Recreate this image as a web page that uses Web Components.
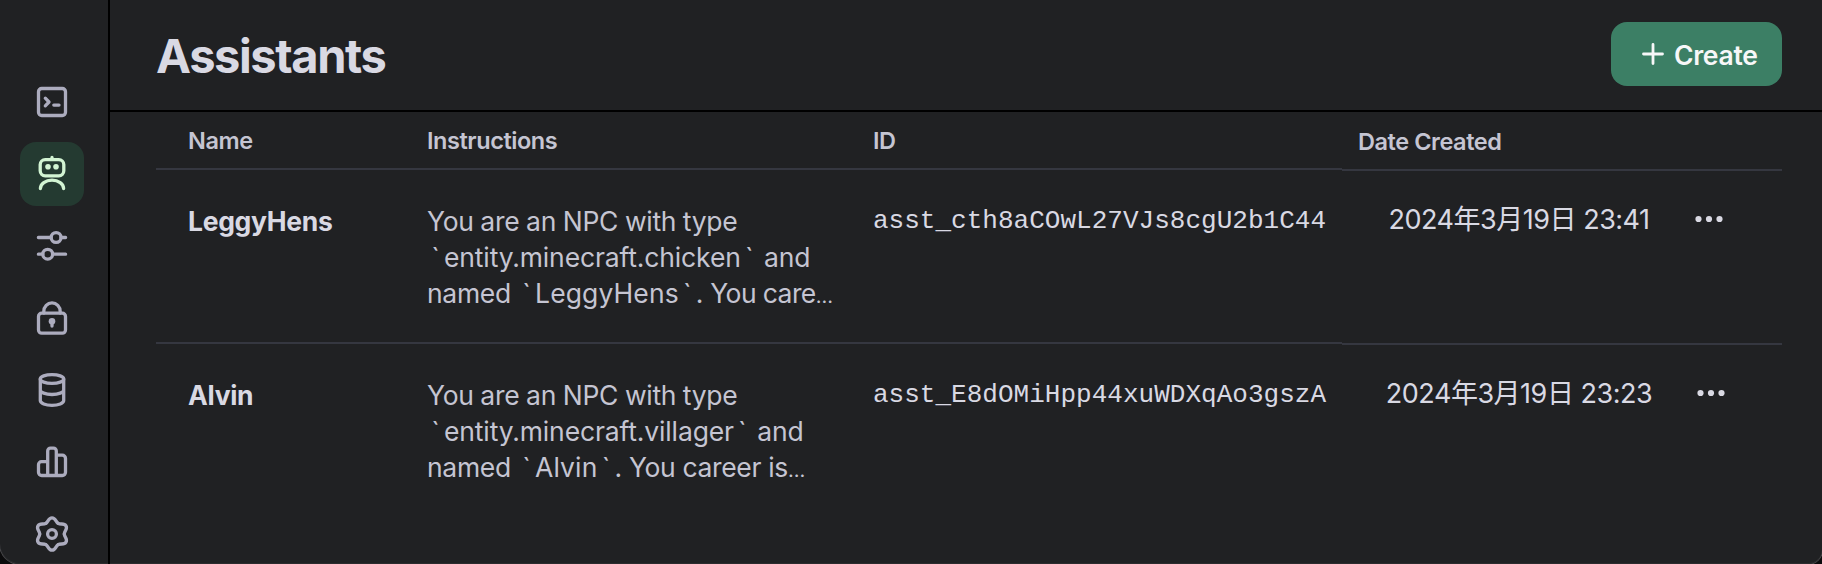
<!DOCTYPE html>
<html lang="en">
<head>
<meta charset="utf-8">
<title>Assistants</title>
<style>
html,body{margin:0;height:100%;background:#0b0b0c;overflow:hidden}
body{font-family:Inter,"Noto Sans CJK SC",sans-serif;color:#d9d9e3}
</style>
</head>
<body>
<app-window>
  <side-nav slot="nav">
    <nav-item icon="terminal"></nav-item>
    <nav-item icon="robot" active></nav-item>
    <nav-item icon="sliders"></nav-item>
    <nav-item icon="lock"></nav-item>
    <nav-item icon="database"></nav-item>
    <nav-item icon="chart"></nav-item>
    <nav-item icon="gear"></nav-item>
  </side-nav>
  <page-header>Assistants<create-button slot="action">Create</create-button></page-header>
  <assistant-table>
    <table-head></table-head>
    <assistant-row assistant-id="asst_cth8aCOwL27VJs8cgU2b1C44">
      <span slot="name">LeggyHens</span>
      <text-line slot="text" style="letter-spacing:-.3px;word-spacing:-.4px">You are an NPC with type</text-line>
      <text-line slot="text" style="letter-spacing:-.14px;word-spacing:-1px"><back-tick>`</back-tick>entity.minecraft.chicken<back-tick>`</back-tick> and</text-line>
      <text-line slot="text" style="letter-spacing:-.3px">named <back-tick>`</back-tick><span style="letter-spacing:.1px">LeggyHens</span><back-tick>`</back-tick>. <span style="letter-spacing:-.6px">You care</span><span style="font-size:20px">…</span></text-line>
      <span slot="date">2024年3月19日 23:41</span>
    </assistant-row>
    <assistant-row assistant-id="asst_E8dOMiHpp44xuWDXqAo3gszA">
      <span slot="name">Alvin</span>
      <text-line slot="text" style="letter-spacing:-.3px;word-spacing:-.4px">You are an NPC with type</text-line>
      <text-line slot="text" style="letter-spacing:-.14px;word-spacing:-1px"><back-tick>`</back-tick>entity.minecraft.villager<back-tick>`</back-tick> and</text-line>
      <text-line slot="text" style="letter-spacing:-.3px">named <back-tick>`</back-tick><span style="letter-spacing:.1px">Alvin</span><back-tick>`</back-tick>. <span style="letter-spacing:-.35px">You career is</span><span style="font-size:20px">…</span></text-line>
      <span slot="date">2024年3月19日 23:23</span>
    </assistant-row>
  </assistant-table>
</app-window>
<script>
const define = (name, html, setup) => customElements.define(name, class extends HTMLElement {
  constructor() {
    super();
    this.attachShadow({ mode: "open" }).innerHTML = html;
  }
  connectedCallback() { if (setup) setup(this, this.shadowRoot); }
});

const lobe = '<path d="M17.85 13.35C20.6 11.8 20.2 7.8 24 7.8S27.4 11.8 30.15 13.35"/>';
const ICONS = {
  terminal: '<rect x="10.5" y="10.5" width="27" height="27" rx="3.2"/><path d="M17.3 20.2L21 24l-3.7 3.8M25.8 27.1H31"/>',
  robot: '<rect x="12.2" y="9.6" width="23.6" height="16.2" rx="5"/><path d="M24 7.4V9M12.4 38.6a11.6 8.4 0 0 1 23.2 0"/><g fill="currentColor" stroke="none"><circle cx="20" cy="16.7" r="2.8"/><circle cx="28" cy="16.7" r="2.8"/></g>',
  sliders: '<path d="M10.4 15.5H23M33 15.5h4.6M10.4 32.2H14.8M24.6 32.2h13"/><circle cx="28.1" cy="15.5" r="4.9"/><circle cx="19.7" cy="32.2" r="4.9"/>',
  lock: '<rect x="10.5" y="19.2" width="27" height="20" rx="3.2"/><path d="M15.8 19v-1.6a8.2 8.6 0 0 1 16.4 0V19M24 27.5v4.6"/><circle cx="24" cy="27.2" r="3.3" fill="currentColor" stroke="none"/>',
  database: '<ellipse cx="24" cy="13" rx="11.7" ry="4.4"/><path d="M12.3 13v21.6c0 2.6 5.2 4.7 11.7 4.7s11.7-2.1 11.7-4.7V13M12.3 24c0 2.4 5.2 4.5 11.7 4.5S35.7 26.4 35.7 24"/>',
  chart: '<path d="M19.7 37.5h-6a3.2 3.2 0 0 1-3.2-3.2V26.7a3 3 0 0 1 3-3h6M19.7 37.5V13a2.8 2.8 0 0 1 2.8-2.8h3a2.8 2.8 0 0 1 2.8 2.8v24.5zM28.3 17.2h6a3.2 3.2 0 0 1 3.2 3.2v13.9a3.2 3.2 0 0 1-3.2 3.2h-6"/>',
  gear: [0, 60, 120, 180, 240, 300].map(a => `<g transform="rotate(${a} 24 24)">${lobe}</g>`).join('') + '<circle cx="24" cy="24" r="4.4"/>'
};

define("app-window", `
<style>
:host{display:grid;grid-template-columns:110px 1fr;grid-template-rows:112px 1fr;height:564px;box-sizing:border-box;
  background:#202123;border-radius:0 0 14px 20px;box-shadow:inset 0 -1px 0 #2b2c2e,0 0 0 1px #4a4a4c;overflow:hidden}
::slotted([slot=nav]){grid-row:1 / span 2}
</style><slot name="nav"></slot><slot></slot>`);

define("side-nav", `
<style>
:host{display:flex;flex-direction:column;gap:8px;padding:70px 0 0 20px;box-sizing:border-box;border-right:2px solid #000;min-height:0}
</style><slot></slot>`);

define("nav-item", `
<style>
:host{display:block;flex:none;width:64px;height:64px;border-radius:16px;color:#acacbe}
:host([active]){background:#243a31;color:#d2f4d3}
svg{display:block;width:48px;height:48px;margin:0 8px;padding:8px 0;fill:none;stroke:currentColor;stroke-width:3.3;stroke-linecap:round;stroke-linejoin:round}
</style><svg viewBox="0 0 48 48"></svg>`, (el, root) => {
  root.querySelector("svg").innerHTML = ICONS[el.getAttribute("icon")];
});

define("page-header", `
<style>
:host{display:flex;align-items:center;justify-content:space-between;box-sizing:border-box;border-bottom:2px solid #000;padding:0 40px 2px 46px}
h1{margin:0;padding-top:3px;font-size:47px;font-weight:700;line-height:56px;letter-spacing:-1.4px}
</style><h1><slot></slot></h1><slot name="action"></slot>`);

define("create-button", `
<style>
:host{display:flex;align-items:center;box-sizing:border-box;width:171px;height:64px;border-radius:16px;background:#3c7f65;color:#f7f7f8;
  padding-left:29px;font-size:26.5px;font-weight:600;letter-spacing:-.3px;line-height:36px}
svg{flex:none;width:26px;height:26px;margin-right:8px;stroke:currentColor;stroke-width:2.8;stroke-linecap:round}
span{padding-top:2px}
</style><svg viewBox="0 0 26 26"><path d="M13 3.5v19M3.5 13h19"/></svg><span><slot></slot></span>`);

define("assistant-table", `<style>:host{display:block;padding:0 40px 0 46px}</style><slot></slot>`);

const columns = `display:grid;grid-template-columns:271px 446px 469px 440px`;
define("table-head", `
<style>
:host{${columns};height:58px;color:#c5c5d2;font-size:23.5px;font-weight:600;line-height:56px;letter-spacing:-.44px}
div{box-sizing:border-box;height:58px;border-bottom:2px solid #353740;padding-top:1px;line-height:56px}
.name{padding-left:32px}
.date{margin-top:1px;padding-left:16px}
</style><div class="name">Name</div><div>Instructions</div><div>ID</div><div class="date">Date Created</div>`);

define("assistant-row", `
<style>
:host{${columns};height:174px;font-size:26.5px;line-height:36px}
.cell{box-sizing:border-box;height:174px;border-bottom:2px solid #353740;padding-top:33px}
:host(:last-child) .cell{border-color:transparent}
.cell.name{padding:33px 0 0 32px;font-weight:700;letter-spacing:-.3px}
.text{color:#c5c5d2}
.id{font:26px/36px "Liberation Mono",monospace;letter-spacing:.02px}
.cell.date{margin-top:1px;display:flex;padding:30px 9px 0 0;justify-content:center;font-size:27px;letter-spacing:-.48px}
.date svg{flex:none;width:36px;height:36px;margin-left:41px;fill:currentColor}
.date span{white-space:nowrap;padding-top:1px}
</style>
<div class="cell name"><slot name="name"></slot></div>
<div class="cell text"><slot name="text"></slot></div>
<div class="cell id"></div>
<div class="cell date"><span><slot name="date"></slot></span><svg viewBox="0 0 36 36"><circle cx="7.5" cy="18" r="3.1"/><circle cx="18" cy="18" r="3.1"/><circle cx="28.5" cy="18" r="3.1"/></svg></div>`, (el, root) => {
  root.querySelector(".id").textContent = el.getAttribute("assistant-id");
});

define("text-line", `<style>:host{display:block;height:36px;white-space:nowrap}</style><slot></slot>`);
define("back-tick", `<style>:host{display:inline-block;width:17px;text-align:center;letter-spacing:0}</style><slot></slot>`);
</script>
</body>
</html>
